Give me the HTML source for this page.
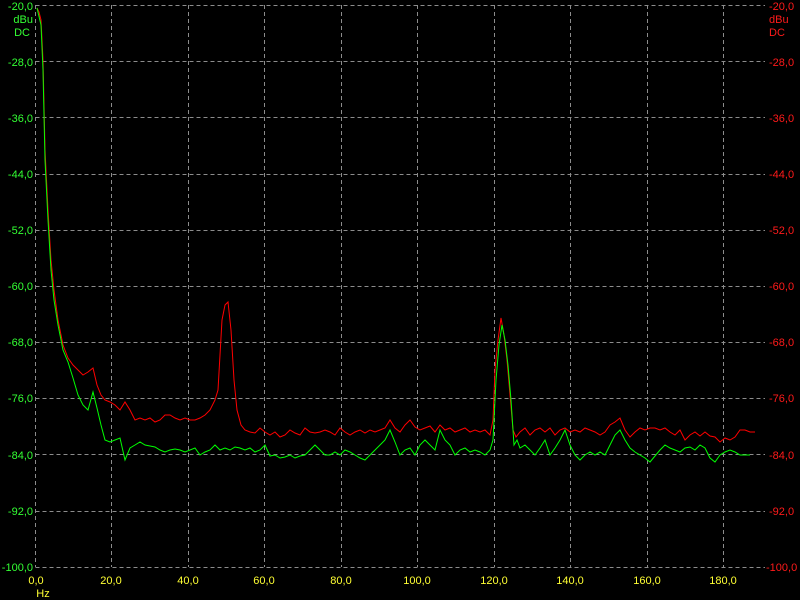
<!DOCTYPE html>
<html><head><meta charset="utf-8"><style>
html,body{margin:0;padding:0;background:#000;width:800px;height:600px;overflow:hidden}
svg{display:block}
text{font-family:"Liberation Sans",sans-serif;font-size:11px}
</style></head><body>
<svg width="800" height="600" viewBox="0 0 800 600">
<rect width="800" height="600" fill="#000"/>
<g stroke="#8c8c8c" stroke-width="1" stroke-dasharray="4,3" fill="none">
<path d="M35.5 5.5H765M35.5 61.5H765M35.5 117.5H765M35.5 174.5H765M35.5 230.5H765M35.5 286.5H765M35.5 342.5H765M35.5 398.5H765M35.5 454.5H765M35.5 511.5H765M35.5 567.5H765"/>
<path d="M35.5 5V567M111.5 5V567M188.5 5V567M264.5 5V567M341.5 5V567M417.5 5V567M494.5 5V567M570.5 5V567M647.5 5V567M723.5 5V567"/>
</g>
<g fill="#33ff33" text-anchor="end">
<text x="33" y="10">-20,0</text><text x="33" y="66">-28,0</text><text x="33" y="122">-36,0</text><text x="33" y="178">-44,0</text><text x="33" y="234">-52,0</text><text x="33" y="290">-60,0</text><text x="33" y="346">-68,0</text><text x="33" y="402">-76,0</text><text x="33" y="459">-84,0</text><text x="33" y="515">-92,0</text><text x="33" y="571">-100,0</text>
<text x="33" y="23">dBu</text><text x="30" y="36">DC</text>
</g>
<g fill="#ff1a1a" text-anchor="start">
<text x="769" y="10">-20,0</text><text x="769" y="66">-28,0</text><text x="769" y="122">-36,0</text><text x="769" y="178">-44,0</text><text x="769" y="234">-52,0</text><text x="769" y="290">-60,0</text><text x="769" y="346">-68,0</text><text x="769" y="402">-76,0</text><text x="769" y="459">-84,0</text><text x="769" y="515">-92,0</text><text x="766" y="571">-100,0</text>
<text x="769" y="23">dBu</text><text x="769" y="36">DC</text>
</g>
<g fill="#ffff33" text-anchor="middle">
<text x="36" y="584">0,0</text><text x="111" y="584">20,0</text><text x="188" y="584">40,0</text><text x="264" y="584">60,0</text><text x="341" y="584">80,0</text><text x="417" y="584">100,0</text><text x="494" y="584">120,0</text><text x="570" y="584">140,0</text><text x="647" y="584">160,0</text><text x="723" y="584">180,0</text>
<text x="43" y="597">Hz</text>
</g>
<polyline fill="none" stroke="#ff0000" stroke-width="1" points="37,8 39,12 41,20 43,60 45,150 48,210 51,260 54,290 58,320 63,345 68,358 73,365 78,370 83,375 88,372 93,368 97,385 101,395 105,400 110,402 115,405 120,410 125,402 130,410 135,420 140,418 145,420 150,418 155,422 160,420 165,415 170,415 175,418 180,420 185,418 190,420 195,420 200,418 205,415 210,410 215,400 218,390 222,320 225,305 228,302 231,330 234,380 237,410 241,425 245,430 250,432 255,433 260,428 265,432 270,435 275,432 280,437 285,435 290,430 295,433 300,435 305,428 310,432 315,433 320,432 325,430 330,432 335,435 340,428 345,432 350,435 355,432 360,430 365,433 370,430 375,432 380,430 385,428 390,420 395,428 400,432 405,425 410,420 415,427 420,430 425,428 430,426 435,432 440,425 445,430 450,428 455,432 460,430 465,428 470,432 475,430 480,432 485,430 490,435 493,420 495,370 498,340 501,318 504,335 507,360 510,395 513,430 516,437 520,432 525,428 530,435 535,430 540,428 545,432 550,428 555,435 560,430 565,428 570,432 575,430 580,432 585,428 590,430 595,432 600,435 605,432 610,425 615,422 620,418 625,430 630,437 635,432 640,428 645,430 650,428 655,428 660,430 665,428 670,432 675,435 680,430 685,440 690,435 695,432 700,436 705,432 710,436 715,437 720,442 725,438 730,440 735,437 740,430 745,430 750,432 755,432"/>
<polyline fill="none" stroke="#00ff00" stroke-width="1" points="37,8 41,25 43,70 45,160 48,220 51,270 54,300 58,325 63,350 68,362 73,378 78,395 83,405 88,410 93,392 97,408 101,425 105,440 110,442 115,440 120,438 125,460 130,448 135,445 140,442 145,445 150,446 155,447 160,450 165,452 170,450 175,449 180,450 185,452 190,450 195,448 200,455 205,452 210,450 215,445 220,450 225,448 230,450 235,447 240,448 245,450 250,448 255,452 260,450 265,445 270,456 275,455 280,458 285,457 290,455 295,458 300,456 305,455 310,450 315,445 320,450 325,455 330,455 335,452 340,455 345,450 350,452 355,455 360,458 365,460 370,455 375,450 380,445 385,440 390,430 395,442 400,455 405,450 410,448 415,455 420,445 425,440 430,445 435,450 440,430 445,440 450,445 455,455 460,450 465,448 470,452 475,450 480,452 485,455 490,450 493,440 496,380 499,345 502,325 505,340 508,365 511,400 514,445 517,440 520,448 525,445 530,450 535,455 540,448 545,440 550,455 555,448 560,440 565,430 570,445 575,455 580,460 585,455 590,452 595,455 600,452 605,455 610,445 615,435 620,430 625,440 630,448 635,452 640,455 645,458 650,462 655,456 660,450 665,445 670,448 675,450 680,452 685,448 690,447 695,450 700,445 705,448 710,458 715,462 720,455 725,452 730,450 735,452 740,455 745,455 750,455"/>
</svg>
</body></html>
